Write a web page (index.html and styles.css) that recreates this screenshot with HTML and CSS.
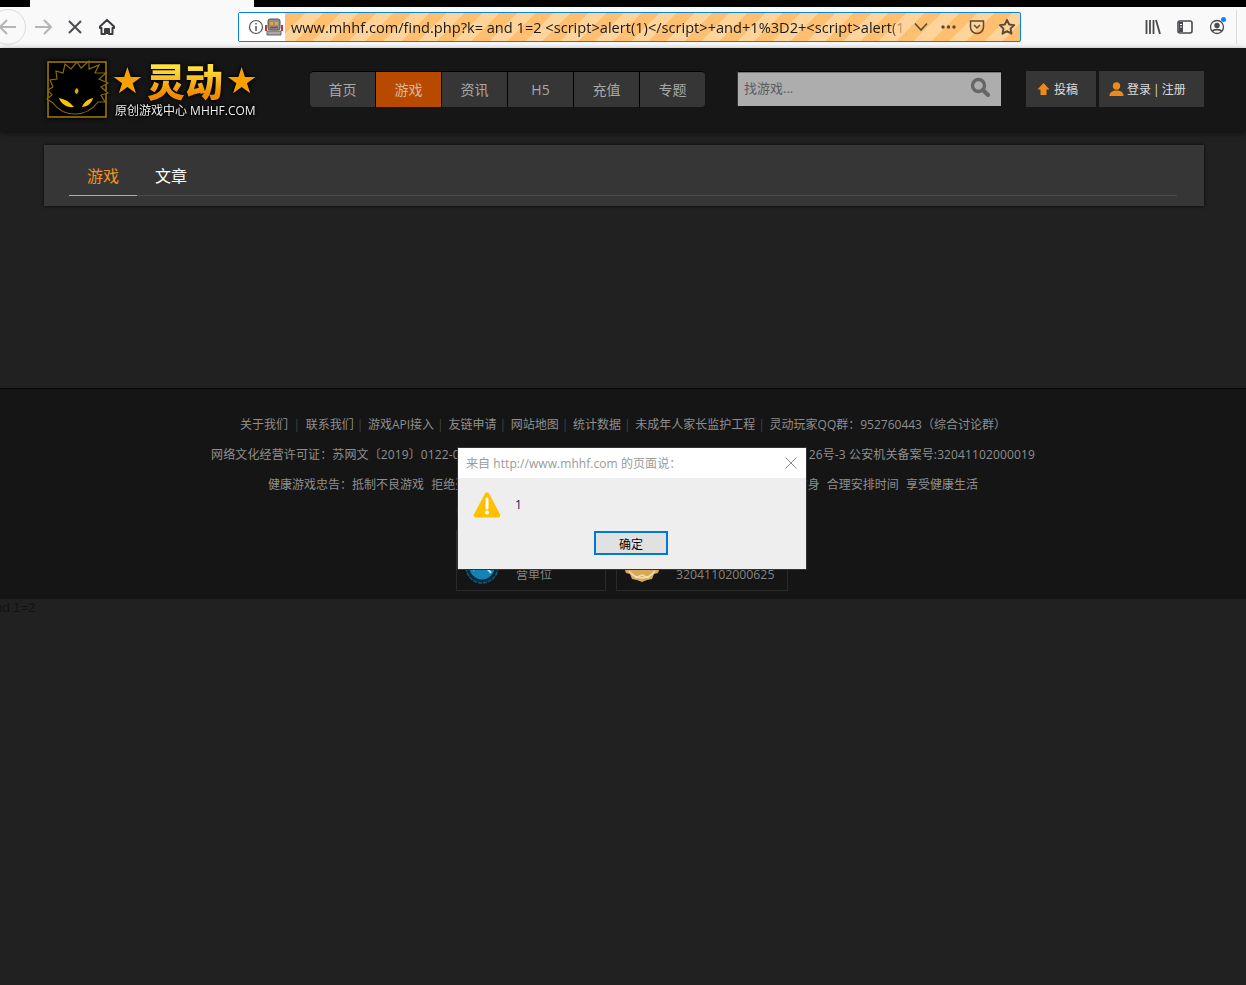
FILE: index.html
```html
<!DOCTYPE html>
<html>
<head>
    <title>灵动游戏</title>
    <link rel="stylesheet" href="styles.css">
</head>
<body>
    <div class="titlebar"><div class="tab"></div></div>

    <div class="toolbar">
        <div class="back-circle">
            <svg width="22" height="22" viewBox="0 0 22 22"><path d="M19 11H4M10 4l-7 7 7 7" fill="none" stroke="#b5b5b5" stroke-width="2"/></svg>
        </div>
        <svg class="tool" width="18" height="18" viewBox="0 0 18 18"><path d="M1 9h15M10 2l7 7-7 7" fill="none" stroke="#b5b5b5" stroke-width="2"/></svg>
        <svg class="tool stop" width="16" height="16" viewBox="0 0 16 16"><path d="M2 2l12 12M14 2L2 14" fill="none" stroke="#4a4a4f" stroke-width="2"/></svg>
        <svg class="tool home" width="18" height="18" viewBox="0 0 18 18"><path d="M9 2L2 8.500V10h1.500v6h3.500v-5h4v5h3.500v-6H16V8.500z" fill="none" stroke="#3c3c40" stroke-width="2" stroke-linejoin="round"/><path d="M8 12h2v4H8z" fill="#3c3c40"/></svg>

        <div class="urlbar">
            <div class="identity">
                <svg width="16" height="16" viewBox="0 0 16 16"><circle cx="8" cy="8" r="6.500" fill="none" stroke="#55555a" stroke-width="1.200"/><path d="M8 7v5M8 4v1.600" stroke="#55555a" stroke-width="1.500"/></svg>
                <svg width="18" height="18" viewBox="0 0 18 18"><path d="M0 7h2v6H0zM16 7h2v6h-2z" fill="#c8342b"/><rect x="3" y="1" width="12" height="11" rx="2" fill="#8f8f8f" stroke="#555"/><rect x="5" y="4" width="3" height="3" fill="#e8a33c"/><rect x="10" y="4" width="3" height="3" fill="#e8a33c"/><path d="M5 9.500h8" stroke="#a8402a" stroke-width="1.500"/><path d="M2 13h14v4H2z" fill="#a8a8a8" stroke="#666"/></svg>
            </div>
            <div class="url-text">www.mhhf.com/find.php?k= and 1=2 &lt;script&gt;alert(1)&lt;/script&gt;+and+1%3D2+&lt;script&gt;alert(1)&lt;/script&gt;</div>
            <div class="url-actions">
                <svg width="14" height="10" viewBox="0 0 14 10"><path d="M1 1.500l6 6.500 6-6.500" fill="none" stroke="#5a4a38" stroke-width="1.600"/></svg>
                <svg width="15" height="4" viewBox="0 0 15 4"><circle cx="2" cy="2" r="1.700" fill="#5a4a38"/><circle cx="7.500" cy="2" r="1.700" fill="#5a4a38"/><circle cx="13" cy="2" r="1.700" fill="#5a4a38"/></svg>
                <svg width="16" height="16" viewBox="0 0 16 16"><path d="M1.500 2h13v6a6.500 6.500 0 0 1-13 0z" fill="none" stroke="#5a4a38" stroke-width="1.500"/><path d="M5 6l3 3 3-3" fill="none" stroke="#5a4a38" stroke-width="1.500"/></svg>
                <svg width="18" height="18" viewBox="0 0 18 18"><path d="M9 1.800l2.200 4.700 5 .6-3.700 3.500 1 5.100L9 13.200l-4.500 2.500 1-5.100L1.800 7.100l5-.6z" fill="none" stroke="#5a4a38" stroke-width="1.900" stroke-linejoin="round"/></svg>
            </div>
        </div>

        <div class="toolbar-right">
            <svg width="16" height="16" viewBox="0 0 16 16"><path d="M1.500 1v14M5 1v14M8.500 1v14M11 1l4 14" fill="none" stroke="#4a4a4f" stroke-width="1.800"/></svg>
            <svg width="16" height="14" viewBox="0 0 16 14"><rect x="1" y="1" width="14" height="12" rx="2" fill="none" stroke="#4a4a4f" stroke-width="1.600"/><path d="M2 2h4v10H2z" fill="#4a4a4f"/><path d="M3 4.500h2M3 7h2" stroke="#f9f9fa"/></svg>
            <div class="account">
                <svg width="16" height="16" viewBox="0 0 16 16"><circle cx="8" cy="8" r="6.500" fill="none" stroke="#4a4a4f" stroke-width="1.300"/><circle cx="8" cy="6.500" r="2.700" fill="#4a4a4f"/><path d="M3.500 12.500c1-2.500 8-2.500 9 0" fill="none" stroke="#4a4a4f" stroke-width="1.800"/></svg>
                <span class="account-dot"></span>
            </div>
            <div class="toolbar-edge"></div>
        </div>
    </div>

    <!-- site header -->
    <div class="header">
        <div class="logo">
            <svg class="logo-face" width="64" height="60" viewBox="0 0 64 60">
                <path d="M3 3h58v55H3z" fill="#000" stroke="#a57e05" stroke-width="1.500"/>
                <path d="M8 44L2 40l5-4-4-5 5-3-3-7 7-1-1-8 7 2 2-9 6 5 6-7 4 6 8-7v8l10-4-4 8h11l-7 6 9 4-7 4 7 6-7 2 4 7h-7q-9 12-23 12T8 44z" fill="#000" stroke="#8a6a05" stroke-width="1.200"/>
                <path d="M14 39c6 1 11 4 15 9-7 1-13-3-15-9zM48 39c-5 1-9 4-11 9 5 0 10-4 11-9z" fill="#f7c400"/>
                <path d="M32 29c2 2 2 4 0 6-3-1-3-4 0-6z" fill="#e0a800"/>
            </svg>
            <div class="logo-right">
                <div class="logo-title"><span class="logo-star">★</span><span class="logo-name">灵动</span><span class="logo-star">★</span></div>
                <div class="logo-sub">原创游戏中心 MHHF.COM</div>
            </div>
        </div>

        <ul class="nav">
            <li>首页</li>
            <li class="active">游戏</li>
            <li>资讯</li>
            <li>H5</li>
            <li>充值</li>
            <li>专题</li>
        </ul>

        <div class="search">
            <span>找游戏...</span>
            <svg width="20" height="20" viewBox="0 0 20 20"><circle cx="8.500" cy="8.500" r="6" fill="none" stroke="#666" stroke-width="3.400"/><path d="M13 13l5 5" stroke="#666" stroke-width="4" stroke-linecap="round"/></svg>
        </div>

        <div class="user-btns">
            <a class="user-btn btn-post">
                <svg width="13" height="14" viewBox="0 0 13 14"><path d="M6.500 1L12.500 7.500H9.500V13H3.500V7.500H.5z" fill="#ec8a1c"/></svg>
                投稿
            </a>
            <a class="user-btn btn-login">
                <svg width="15" height="14" viewBox="0 0 15 14"><circle cx="7.500" cy="4" r="3.700" fill="#ec8a1c"/><path d="M.5 14c0-4 3-5.500 7-5.500s7 1.500 7 5.500z" fill="#ec8a1c"/></svg>
                登录 | 注册
            </a>
        </div>
    </div>

    <div class="main">
        <div class="panel">
            <div class="tabs">
                <div class="tab-item current">游戏</div>
                <div class="tab-item">文章</div>
            </div>
        </div>
    </div>

    <div class="footer">
        <p class="links">
            <a>关于我们</a><i class="gap-wide">|</i><a>联系我们</a><i>|</i><a>游戏API接入</a><i>|</i><a>友链申请</a><i>|</i><a>网站地图</a><i>|</i><a>统计数据</a><i>|</i><a>未成年人家长监护工程</a><i>|</i><a>灵动玩家QQ群：952760443（综合讨论群）</a>
        </p>
        <p class="licence">网络文化经营许可证：苏网文〔2019〕0122-0<span class="hidden-part"></span>26号-3 公安机关备案号:32041102000019</p>
        <p class="advice">健康游戏忠告：抵制不良游戏&nbsp; 拒绝盗版游戏&nbsp; 注意自我保护&nbsp; 谨防受骗上当&nbsp; 适度游戏益脑&nbsp; 沉迷游戏伤身&nbsp; 合理安排时间&nbsp; 享受健康生活</p>
        <p class="blue-row">营业执照</p>
        <div class="badges">
            <div class="badge badge-one">
                <svg width="34" height="34" viewBox="0 0 34 34"><circle cx="17" cy="17" r="16" fill="#0a2a3c" stroke="#14597a" stroke-width="1.500" stroke-dasharray="4 1"/><circle cx="17" cy="17" r="12.500" fill="#1283b5"/><path d="M8 20c5-5 12-5 18 3" fill="none" stroke="#cfe6f0" stroke-width="2"/></svg>
                <span>备案经<br>营单位</span>
            </div>
            <div class="badge badge-two">
                <svg width="38" height="34" viewBox="0 0 38 34"><path d="M0 15l7 2 12 2 12-2 7-2-3 8-4 1-2 5-5 1-5 2-5-2-5-1-2-5-4-1z" fill="#d8a95a"/><path d="M6 21c3 4 8 7 13 7s10-3 13-7M12 28l7-3 7 3" fill="none" stroke="#f3dcae" stroke-width="1.500"/><circle cx="19" cy="11" r="8" fill="#23358a"/></svg>
                <span>备案号<br>32041102000625</span>
            </div>
        </div>
    </div>

    <div class="echo">and 1=2</div>

    <!-- alert box -->
    <div class="dialog">
        <div class="dialog-head">
            <span>来自 http://www.mhhf.com 的页面说：</span>
            <svg width="12" height="12" viewBox="0 0 12 12"><path d="M.5.500l11 11M11.500.500l-11 11" stroke="#8a8a8a" stroke-width="1"/></svg>
        </div>
        <div class="dialog-body">
            <div class="dialog-msg">
                <svg width="28" height="28" viewBox="0 0 28 28"><path d="M14 1.500c1 0 1.800.5 2.300 1.400l10.800 20.500c.8 1.500-.2 3.100-1.900 3.100H2.800c-1.700 0-2.700-1.600-1.900-3.100L11.700 2.900C12.200 2 13 1.500 14 1.500z" fill="#ffc000"/><path d="M14 8v9" stroke="#fff" stroke-width="3" stroke-linecap="round"/><circle cx="14" cy="21.500" r="2" fill="#fff"/></svg>
                <span>1</span>
            </div>
            <button class="dialog-ok">确定</button>
        </div>
    </div>
</body>
</html>
```

FILE: styles.css
```css
body {
    margin: 0;
    height: 985px;
    overflow: hidden;
    background-color: #212121;
    font-family: "Open Sans", "Noto Sans CJK SC", sans-serif;
    font-size: 12px;
    color: #8f8f8f;
}

ul, p {
    margin: 0;
    padding: 0;
}

/* browser chrome */
.titlebar {
    height: 7px;
    background-color: #000;
    padding-left: 30px;
}

.tab {
    width: 224px;
    height: 7px;
    background-color: #f9f9fa;
}

.toolbar {
    height: 41px;
    padding-bottom: 1px;
    box-sizing: border-box;
    background-color: #f9f9fa;
    display: flex;
    align-items: center;
    overflow: hidden;
}

.back-circle {
    width: 34px;
    height: 34px;
    margin-left: -10px;
    border: 1px solid #dcdcdc;
    border-radius: 50%;
    display: flex;
    align-items: center;
    justify-content: center;
    flex-shrink: 0;
}

.tool {
    flex-shrink: 0;
    margin-left: 8px;
}

.stop {
    margin-left: 15px;
}

.home {
    margin-left: 15px;
}

.urlbar {
    width: 781px;
    height: 28px;
    margin-left: 122px;
    border: 1px solid #0a84d8;
    border-radius: 2px;
    display: flex;
    align-items: center;
    flex-shrink: 0;
    position: relative;
    background: repeating-linear-gradient(-45deg, #ffbf70, #ffbf70 12.500px, #ffd49b 12.500px, #ffd49b 25px);
}

.identity {
    width: 46px;
    height: 28px;
    background-color: #fff;
    display: flex;
    align-items: center;
    padding-left: 9px;
    gap: 1px;
    box-sizing: border-box;
    flex-shrink: 0;
}

.url-text {
    width: 616px;
    margin-left: 6px;
    white-space: nowrap;
    overflow: hidden;
    font-size: 14.600px;
    color: #1a1a1a;
    flex-shrink: 0;
    -webkit-mask-image: linear-gradient(to right, #000 97%, transparent);
    mask-image: linear-gradient(to right, #000 97%, transparent);
}

.url-actions {
    display: flex;
    align-items: center;
    margin-left: 7px;
    gap: 13px;
}

.toolbar-right {
    display: flex;
    align-items: center;
    gap: 16px;
    margin-left: 124px;
}

.account {
    position: relative;
    height: 16px;
}

.account-dot {
    position: absolute;
    top: -2px;
    right: -1px;
    width: 5px;
    height: 5px;
    border-radius: 50%;
    background-color: #0a84ff;
}

.toolbar-edge {
    width: 1px;
    height: 34px;
    background-color: #dcdcdc;
    margin-left: -5px;
}

/* site header */
.header {
    height: 83px;
    background-color: #161616;
    box-shadow: 0 2px 6px rgba(0, 0, 0, .6);
    display: flex;
    align-items: flex-start;
    position: relative;
}

.logo {
    width: 215px;
    height: 60px;
    margin: 11px 0 0 45px;
    display: flex;
    flex-shrink: 0;
}

.logo-face {
    flex-shrink: 0;
    overflow: visible;
    filter: drop-shadow(0 0 1px #000) drop-shadow(0 0 2px #000);
}

.logo-right {
    margin-left: 3px;
    filter: drop-shadow(0 0 1px #000) drop-shadow(0 0 2px #000);
}

.logo-title {
    display: flex;
    align-items: center;
    height: 44px;
    white-space: nowrap;
}

.logo-star {
    font-size: 36px;
    line-height: 44px;
    color: #f7a000;
    font-family: "DejaVu Sans", sans-serif;
    width: 31px;
    text-align: center;
    display: flex;
    justify-content: center;
}

.logo-name {
    font-family: "Noto Sans CJK SC", sans-serif;
    font-weight: 900;
    font-size: 38px;
    line-height: 42px;
    margin: 0 3px 2px 4px;
    background: linear-gradient(#ffe23c 20%, #f08a00 85%);
    -webkit-background-clip: text;
    background-clip: text;
    color: transparent;
}

.logo-sub {
    font-size: 12px;
    line-height: 16px;
    color: #eee;
    white-space: nowrap;
    margin-left: 3px;
}

.nav {
    list-style: none;
    display: flex;
    margin: 23px 0 0 50px;
    border-top: 1px solid #000;
    border-radius: 4px;
    overflow: hidden;
    flex-shrink: 0;
}

.nav li {
    width: 65px;
    height: 35px;
    line-height: 35px;
    border-right: 1px solid #000;
    background-color: #363636;
    color: #a8a8a8;
    font-size: 14px;
    text-align: center;
}

.nav li:last-child {
    border-right: none;
}

.nav li.active {
    background-color: #b84a00;
    color: #d8b8a0;
}

.search {
    width: 263px;
    height: 35px;
    margin: 23px 0 0 33px;
    background-color: #adadad;
    border-top: 1px solid #000;
    box-shadow: inset 0 1px 0 #777, -1px 0 0 #333;
    box-sizing: border-box;
    display: flex;
    align-items: center;
    justify-content: space-between;
    padding: 0 11px 4px 6px;
    color: #5c5c5c;
    font-size: 13px;
    flex-shrink: 0;
}

.user-btns {
    display: flex;
    gap: 3px;
    margin: 23px 0 0 25px;
}

.user-btn {
    height: 36px;
    background-color: #363636;
    color: #ddd;
    font-size: 12px;
    display: flex;
    align-items: center;
    gap: 3px;
    box-sizing: border-box;
    white-space: nowrap;
    word-spacing: -1px;
}

.btn-post {
    width: 70px;
    padding-left: 11px;
    gap: 4px;
}

.btn-login {
    width: 105px;
    padding-left: 10px;
}

/* tabs panel */
.main {
    height: 257px;
    padding: 14px 42px 0 44px;
    box-sizing: border-box;
}

.panel {
    height: 61px;
    background-color: #363636;
    box-shadow: 0 0 3px rgba(0, 0, 0, .9);
    padding: 0 27px 0 25px;
}

.tabs {
    display: flex;
    height: 50px;
    border-bottom: 1px solid #4a4a4a;
}

.tab-item {
    width: 68px;
    height: 50px;
    line-height: 62px;
    font-size: 16px;
    color: #fff;
    text-align: center;
}

.tab-item.current {
    color: #f0941e;
    border-bottom: 1px solid #f0a030;
}

/* footer */
.footer {
    height: 211px;
    box-sizing: border-box;
    background-color: #151515;
    border-top: 1px solid #070707;
    padding-top: 21px;
    text-align: center;
    line-height: 30px;
    white-space: nowrap;
}

.footer i {
    font-style: normal;
    color: #444;
    margin: 0 4.700px 0 3px;
}

.footer i.gap-wide {
    margin: 0 5.500px;
}

.licence {
    letter-spacing: .12px;
}

.advice {
    word-spacing: .45px;
}

.hidden-part {
    display: inline-block;
    width: 349px;
}

.blue-row {
    text-align: left;
    padding-left: 456px;
    color: #1f5f8f;
}

.badges {
    display: flex;
    gap: 10px;
    margin: 0 0 0 456px;
}

.badge {
    height: 61px;
    margin-top: 0;
    border: 1px solid #2a2a2a;
    box-sizing: border-box;
    display: flex;
    align-items: flex-end;
    line-height: 17px;
    padding-bottom: 7px;
    text-align: left;
    color: #858585;
    overflow: hidden;
}

.badge svg {
    flex-shrink: 0;
    margin-bottom: -1px;
}

.badge-one {
    width: 150px;
    padding-left: 8px;
    gap: 17px;
}

.badge-two {
    width: 172px;
    padding-left: 6px;
    gap: 15px;
    font-size: 12.300px;
}

.echo {
    margin-left: -12px;
    line-height: 17px;
    color: #111;
    font-family: "Liberation Sans", sans-serif;
    font-size: 13px;
}

/* alert box, sits over the page */
.dialog {
    position: fixed;
    left: 457px;
    top: 447px;
    width: 350px;
    height: 123px;
    box-sizing: border-box;
    border: 1px solid #333;
    background-color: #eee;
}

.dialog-head {
    height: 30px;
    background-color: #fff;
    display: flex;
    align-items: center;
    justify-content: space-between;
    padding: 0 9px 0 8px;
    color: #9a9a9a;
    font-size: 12px;
    letter-spacing: .06px;
}

.dialog-msg {
    display: flex;
    align-items: center;
    height: 53px;
    padding-left: 15px;
    gap: 14px;
    font-size: 12px;
    color: #002266;
}

.dialog-ok {
    display: block;
    width: 74px;
    height: 24px;
    margin: 0 0 0 136px;
    padding: 0;
    border: 2px solid #0078d7;
    background-color: #e1e1e1;
    color: #000;
    font-family: "Noto Sans CJK SC", sans-serif;
    font-size: 12px;
}
```
